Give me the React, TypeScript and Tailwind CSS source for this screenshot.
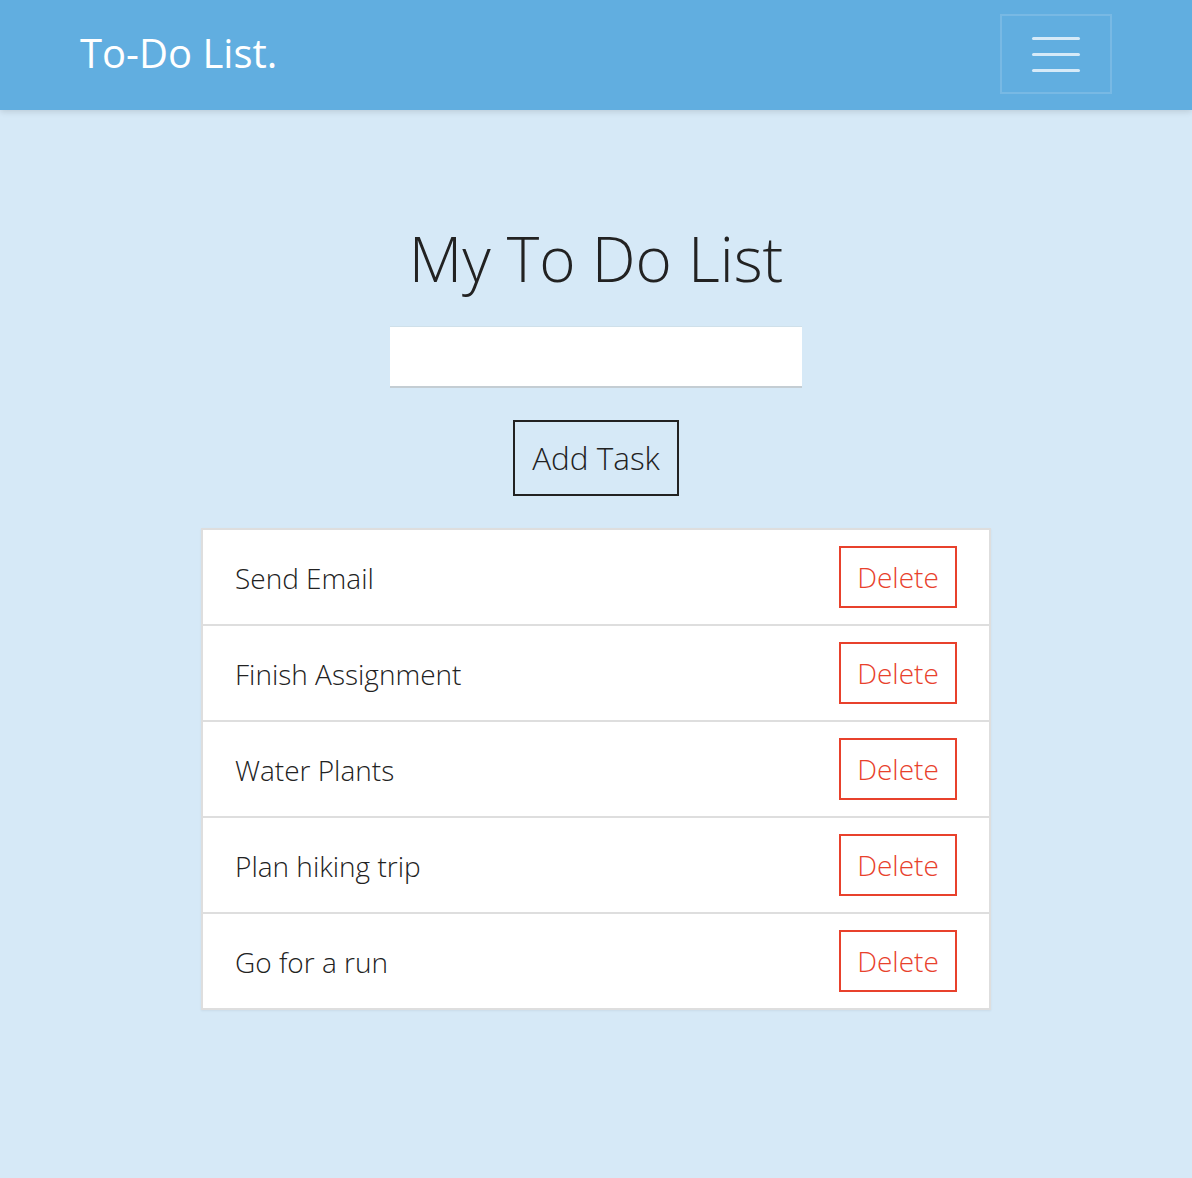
import React from "react";

const tasks = ["Send Email", "Finish Assignment", "Water Plants", "Plan hiking trip", "Go for a run"];

export default function App() {
  return (
    <div className="min-h-[1178px] bg-[#d6e9f7] font-['Open_Sans',sans-serif]">
      <nav className="h-[110px] bg-[#61aee0] flex items-center justify-between pl-[80px] pr-[80px] shadow-[0_2px_6px_rgba(0,0,0,0.12)] relative">
        <span className="text-white text-[40px] font-normal leading-none -mt-[4px]">To-Do List.</span>
        <button className="w-[112px] h-[80px] -mt-[2px] border-2 border-[#78b9e4] flex flex-col items-center justify-center gap-[13px]">
          <span className="block w-[48px] h-[3px] rounded-full bg-[#d6eaf8]" />
          <span className="block w-[48px] h-[3px] rounded-full bg-[#d6eaf8]" />
          <span className="block w-[48px] h-[3px] rounded-full bg-[#d6eaf8]" />
        </button>
      </nav>
      <main className="flex flex-col items-center pt-[117px]">
        <h1 className="text-[62px] font-light text-[#222] leading-none">My To Do List</h1>
        <input className="mt-[37px] w-[412px] h-[62px] bg-white border-t border-t-[#cfe0ea] border-b-2 border-b-[#c4cdd3] outline-none" />
        <button className="mt-[32px] w-[166px] h-[76px] border-2 border-[#222] text-[31.5px] font-light text-[#222]">Add Task</button>
        <ul className="mt-[32px] w-[790px] bg-white border-2 border-[#dedede] shadow-[0_1px_2px_rgba(0,0,0,0.06)]">
          {tasks.map((t, i) => (
            <li
              key={t}
              className={`flex items-center justify-between pl-[32px] pr-[32px] ${i < tasks.length - 1 ? "h-[96px] border-b-2 border-[#dedede]" : "h-[94px]"}`}
            >
              <span className="text-[28px] font-light text-[#222] mt-[1px]">{t}</span>
              <button className="w-[118px] h-[62px] border-2 border-[#e8412c] text-[28px] font-light text-[#e8412c]">Delete</button>
            </li>
          ))}
        </ul>
      </main>
    </div>
  );
}
